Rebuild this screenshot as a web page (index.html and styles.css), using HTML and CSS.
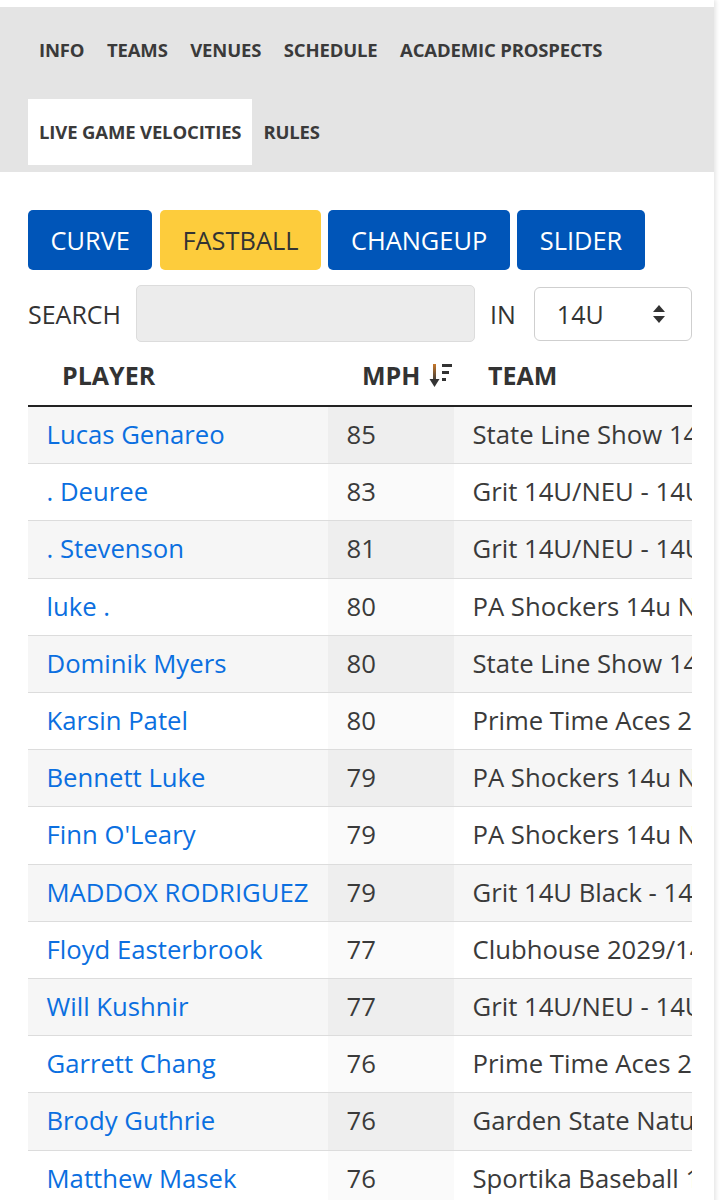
FILE: index.html
```html
<!DOCTYPE html>
<html lang="en">
<head>
    <meta charset="UTF-8">
    <meta name="viewport" content="width=device-width, initial-scale=1.0">
    <title>Live Game Velocities</title>
    <link rel="stylesheet" href="styles.css">
</head>
<body>
    <div class="page">
        <nav class="tabs">
            <a class="tab" href="#">INFO</a>
            <a class="tab" href="#">TEAMS</a>
            <a class="tab" href="#">VENUES</a>
            <a class="tab" href="#">SCHEDULE</a>
            <a class="tab" href="#">ACADEMIC PROSPECTS</a>
            <a class="tab active" href="#">LIVE GAME VELOCITIES</a>
            <a class="tab" href="#">RULES</a>
        </nav>

        <div class="content">
            <div class="pitches">
                <button class="pitch">CURVE</button>
                <button class="pitch selected">FASTBALL</button>
                <button class="pitch">CHANGEUP</button>
                <button class="pitch">SLIDER</button>
            </div>

            <div class="filters">
                <label for="search">SEARCH</label>
                <input type="text" id="search" class="search">
                <span class="in">IN</span>
                <div class="select">
                    <span>14U</span>
                    <svg width="14" height="20" viewBox="0 0 14 20">
                        <path d="M7 1 L13 8 L1 8 Z" fill="#333"/>
                        <path d="M7 19 L13 12 L1 12 Z" fill="#333"/>
                    </svg>
                </div>
            </div>

            <div class="table-wrap">
                <table class="velo">
                    <colgroup>
                        <col class="c-player">
                        <col class="c-mph">
                        <col class="c-team">
                    </colgroup>
                    <thead>
                        <tr>
                            <th>PLAYER</th>
                            <th>MPH
                                <svg class="sort" width="24" height="28" viewBox="0 0 24 28">
                                    <defs>
                                        <linearGradient id="arrowFade" x1="0" y1="0" x2="0" y2="1">
                                            <stop offset="0" stop-color="#c7782a"/>
                                            <stop offset="1" stop-color="#3a3a3a"/>
                                        </linearGradient>
                                    </defs>
                                    <rect x="4" y="3" width="3" height="17" fill="url(#arrowFade)"/>
                                    <path d="M0.5 18 L10.5 18 L5.5 26 Z" fill="#333"/>
                                    <rect x="13" y="3" width="10" height="3" fill="#333"/>
                                    <rect x="13" y="10" width="7" height="3" fill="#333"/>
                                    <rect x="13" y="17" width="4" height="3" fill="#333"/>
                                </svg>
                            </th>
                            <th>TEAM</th>
                        </tr>
                    </thead>
                    <tbody>
                        <tr><td><a href="#">Lucas Genareo</a></td><td>85</td><td>State Line Show 14U</td></tr>
                        <tr><td><a href="#">. Deuree</a></td><td>83</td><td>Grit 14U/NEU - 14U</td></tr>
                        <tr><td><a href="#">. Stevenson</a></td><td>81</td><td>Grit 14U/NEU - 14U</td></tr>
                        <tr><td><a href="#">luke .</a></td><td>80</td><td>PA Shockers 14u NL</td></tr>
                        <tr><td><a href="#">Dominik Myers</a></td><td>80</td><td>State Line Show 14U</td></tr>
                        <tr><td><a href="#">Karsin Patel</a></td><td>80</td><td>Prime Time Aces 2029</td></tr>
                        <tr><td><a href="#">Bennett Luke</a></td><td>79</td><td>PA Shockers 14u NL</td></tr>
                        <tr><td><a href="#">Finn O'Leary</a></td><td>79</td><td>PA Shockers 14u NL</td></tr>
                        <tr><td><a href="#">MADDOX RODRIGUEZ</a></td><td>79</td><td>Grit 14U Black - 14U</td></tr>
                        <tr><td><a href="#">Floyd Easterbrook</a></td><td>77</td><td>Clubhouse 2029/14U</td></tr>
                        <tr><td><a href="#">Will Kushnir</a></td><td>77</td><td>Grit 14U/NEU - 14U</td></tr>
                        <tr><td><a href="#">Garrett Chang</a></td><td>76</td><td>Prime Time Aces 2029</td></tr>
                        <tr><td><a href="#">Brody Guthrie</a></td><td>76</td><td>Garden State Naturals</td></tr>
                        <tr><td><a href="#">Matthew Masek</a></td><td>76</td><td>Sportika Baseball 14U</td></tr>
                        <tr><td><a href="#">Ryan Kelly</a></td><td>75</td><td>State Line Show 14U</td></tr>
                    </tbody>
                </table>
            </div>
        </div>
    </div>
</body>
</html>
```

FILE: styles.css
```css
body {
    font-family: "Open Sans", "Liberation Sans", sans-serif;
    background-color: #fff;
    color: #333;
    margin: 0;
    padding: 0;
    overflow: hidden;
}

.page {
    width: 714px;
    padding-top: 7px;
    box-shadow: 2px 0 4px rgba(0, 0, 0, 0.1);
    min-height: 1200px;
}

/* top tabs */
.tabs {
    background-color: #e4e4e4;
    display: flex;
    flex-wrap: wrap;
    row-gap: 16px;
    padding: 10px 10px 7px 28px;
}

.tab {
    display: block;
    height: 66px;
    line-height: 66px;
    padding: 0 11.5px 0 11px;
    font-size: 18.5px;
    font-weight: 700;
    color: #3a3a3a;
    text-decoration: none;
    letter-spacing: -0.15px;
}

.tab.active {
    background-color: #fff;
    padding: 0 11px;
}

.content {
    padding: 38px 22px 0 28px;
}

/* pitch type buttons */
.pitches {
    display: flex;
    gap: 7.5px;
}

.pitch {
    font-family: inherit;
    font-size: 25.4px;
    line-height: 36px;
    padding: 12px 22.5px;
    border: none;
    border-radius: 5px;
    background-color: #0055b8;
    color: #fff;
    cursor: pointer;
}

.pitch.selected {
    background-color: #fdcc3c;
    color: #333;
}

/* search / age filter */
.filters {
    display: flex;
    align-items: center;
    margin-top: 15px;
    font-size: 25px;
}

.filters label {
    margin-right: 15px;
}

.search {
    width: 339px;
    height: 57px;
    box-sizing: border-box;
    background-color: #ececec;
    border: 1px solid #dcdcdc;
    border-radius: 5px;
}

.in {
    margin: 0 18px 0 15px;
}

.select {
    width: 158px;
    height: 54px;
    box-sizing: border-box;
    display: flex;
    align-items: center;
    justify-content: space-between;
    padding: 0 25px 0 22px;
    border: 1px solid #cfcfcf;
    border-radius: 6px;
    background-color: #fff;
}

/* velocity table */
.table-wrap {
    margin-top: 3px;
    width: 664px;
    overflow: hidden;
}

.velo {
    table-layout: fixed;
    width: 920px;
    border-collapse: collapse;
    font-size: 25.7px;
}

.c-player { width: 300px; }
.c-mph { width: 126px; }
.c-team { width: 494px; }

.velo th {
    text-align: left;
    font-weight: 700;
    font-size: 25px;
    padding: 11px 10px 11px 34px;
    line-height: 38px;
    border-bottom: 2px solid #222;
    white-space: nowrap;
}

.velo th .sort {
    vertical-align: -4px;
    margin-left: 2px;
}

.velo td {
    padding: 10px 18.5px;
    line-height: 36.2px;
    border-top: 1px solid #dcdcdc;
    white-space: nowrap;
    color: #3a3a3a;
}

.velo tbody tr:first-child td {
    border-top: none;
}

.velo tbody tr:nth-child(odd) td {
    background-color: #f6f6f6;
}

.velo tbody tr:nth-child(odd) td:nth-child(2) {
    background-color: #eeeeee;
}

.velo tbody tr:nth-child(even) td:nth-child(2) {
    background-color: #fafafa;
}

.velo td a {
    color: #0b6fe0;
    text-decoration: none;
}
```
